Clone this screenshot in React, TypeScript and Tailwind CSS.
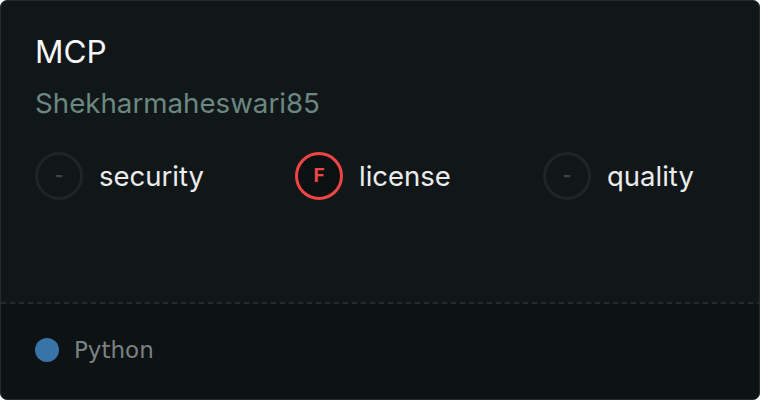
import React from "react";

const inter = { fontFamily: "Inter, 'Noto Sans', sans-serif" };

function Score({ grade, label, active, w }: { grade: string; label: string; active?: boolean; w: string }) {
  return (
    <div className={"flex items-center gap-[16px] " + w}>
      <div
        className={
          active
            ? "w-[48px] h-[48px] rounded-full border-[3px] border-[#f04545] bg-[#0b1012] flex items-center justify-center text-[#f04545] text-[19px] font-bold"
            : "w-[48px] h-[48px] rounded-full border-[3px] border-[#1e2527] flex items-center justify-center text-[#3d4446] text-[19px] font-bold"
        }
      >
        {grade}
      </div>
      <span className="text-[27.5px] leading-[32px] text-[#ececec]">{label}</span>
    </div>
  );
}

export default function App() {
  return (
    <div style={inter} className="w-[760px] h-[400px] bg-white">
      <div className="w-[760px] h-[400px] rounded-[7px] border border-[#262c2e] bg-[#111719] overflow-hidden flex flex-col">
        <div className="h-[301px] flex flex-col px-[34px] pt-[31px]">
          <div className="text-[31.5px] leading-[40px] text-[#f7f7f7]">MCP</div>
          <div className="mt-[15px] text-[27.7px] leading-[32px] text-[#6a8780]">Shekharmaheswari85</div>
          <div className="mt-[33px] flex items-center">
            <Score grade="-" label="security" w="w-[260px]" />
            <Score grade="F" label="license" active w="w-[248px]" />
            <Score grade="-" label="quality" w="" />
          </div>
        </div>
        <div className="h-[2px] bg-[repeating-linear-gradient(90deg,#262c2e_0px,#262c2e_5px,transparent_5px,transparent_9px)]" />
        <div className="flex-1 bg-[#0d1214] flex items-center px-[34px] pb-[3px]">
          <div className="w-[24px] h-[24px] rounded-full bg-[#3874a8]" />
          <span
            className="ml-[15px] text-[23px] text-[#7c8183]"
            style={{ fontFamily: "'DejaVu Sans', sans-serif" }}
          >
            Python
          </span>
        </div>
      </div>
    </div>
  );
}
